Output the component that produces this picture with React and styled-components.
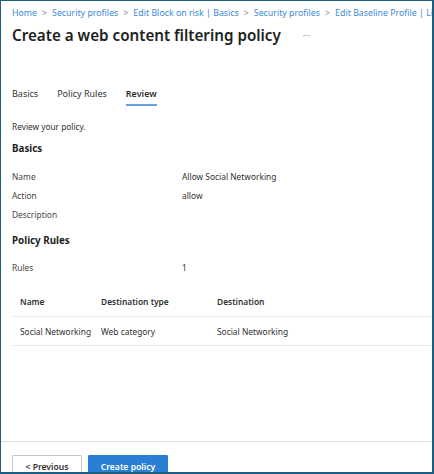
import styled, { createGlobalStyle } from 'styled-components';

const Global = createGlobalStyle`
    html, body {
        margin: 0;
        padding: 0;
        background: #fff;
    }
    * {
        box-sizing: border-box;
    }
`;

const Frame = styled.div`
    width: 434px;
    height: 474px;
    border-style: solid;
    border-color: #1d5f80;
    border-width: 1px 2px 2px 1px;
    display: flex;
    flex-direction: column;
    overflow: hidden;
    font-family: "Noto Sans", "Open Sans", sans-serif;
    color: #323130;
    background: #fff;
`;

const Main = styled.div`
    flex: 1;
    padding: 0 0 0 11px;
`;

const Crumbs = styled.nav`
    display: flex;
    align-items: center;
    white-space: nowrap;
    font-size: 8.8px;
    height: 24px;
`;

const Crumb = styled.span`
    color: #3d89d8;
`;

const Sep = styled.span`
    color: #8a8886;
    margin: 0 5px 0 5px;
`;

const TitleRow = styled.div`
    display: flex;
    align-items: center;
    height: 20px;
`;

const Title = styled.h1`
    margin: 0;
    font-size: 15.2px;
    font-weight: 600;
    color: #201f1e;
    white-space: nowrap;
`;

const More = styled.span`
    margin-left: 22px;
    color: #8a8886;
    font-size: 9px;
`;

const Tabs = styled.div`
    display: flex;
    gap: 19px;
    margin-top: 42px;
`;

const Tab = styled.div`
    font-size: 9px;
    color: #323130;
    font-weight: ${p => (p.$active ? 600 : 400)};
    line-height: 14px;
    padding-bottom: 3px;
    border-bottom: 2px solid ${p => (p.$active ? '#6aa2e0' : 'transparent')};
`;

const Intro = styled.p`
    margin: 14px 0 0;
    font-size: 8.3px;
    line-height: 14px;
`;

const Section = styled.h2`
    margin: ${p => p.$top}px 0 0;
    font-size: 9.8px;
    line-height: 14px;
    font-weight: 700;
    color: #201f1e;
`;

const Field = styled.div`
    display: grid;
    grid-template-columns: 170px 1fr;
    font-size: 8.4px;
    line-height: 19px;
    margin-top: ${p => p.$top || 0}px;
`;

const Label = styled.span`
    color: #484644;
`;

const Table = styled.div`
    margin-top: 10px;
    font-size: 8.4px;
`;

const Row = styled.div`
    display: grid;
    grid-template-columns: 81px 116px 1fr;
    align-items: center;
    height: ${p => (p.$head ? 30 : 29)}px;
    padding-left: 8px;
    border-bottom: 1px solid #edebe9;
    font-weight: ${p => (p.$head ? 600 : 400)};
    white-space: nowrap;
`;

const Footer = styled.div`
    border-top: 1px solid #e1dfdd;
    display: flex;
    gap: 6px;
    padding: 13px 0 0 11px;
    height: 31px;
`;

const Button = styled.button`
    flex: none;
    font-family: inherit;
    font-size: 8.6px;
    font-weight: 600;
    height: 24px;
    width: ${p => p.$w}px;
    border-radius: 1px;
    border: 1px solid ${p => (p.$primary ? '#2a7fd4' : '#c8c6c4')};
    background: ${p => (p.$primary ? '#2a7fd4' : '#fff')};
    color: ${p => (p.$primary ? '#fff' : '#323130')};
    padding: 0;
`;

const crumbs = ['Home', 'Security profiles', 'Edit Block on risk | Basics', 'Security profiles', 'Edit Baseline Profile | Li'];

export default function App() {
    return (
        <Frame>
            <Global />
            <Main>
                <Crumbs>
                    {crumbs.map((c, i) => (
                        <span key={i}>
                            {i > 0 && <Sep>&gt;</Sep>}
                            <Crumb>{c}</Crumb>
                        </span>
                    ))}
                </Crumbs>
                <TitleRow>
                    <Title>Create a web content filtering policy</Title>
                    <More>···</More>
                </TitleRow>
                <Tabs>
                    <Tab>Basics</Tab>
                    <Tab>Policy Rules</Tab>
                    <Tab $active>Review</Tab>
                </Tabs>
                <Intro>Review your policy.</Intro>
                <Section $top={8}>Basics</Section>
                <Field $top={11}><Label>Name</Label><span>Allow Social Networking</span></Field>
                <Field><Label>Action</Label><span>allow</span></Field>
                <Field><Label>Description</Label><span></span></Field>
                <Section $top={10}>Policy Rules</Section>
                <Field $top={10}><Label>Rules</Label><span>1</span></Field>
                <Table>
                    <Row $head>
                        <span>Name</span>
                        <span>Destination type</span>
                        <span>Destination</span>
                    </Row>
                    <Row>
                        <span>Social Networking</span>
                        <span>Web category</span>
                        <span>Social Networking</span>
                    </Row>
                </Table>
            </Main>
            <Footer>
                <Button $w={70}>&lt; Previous</Button>
                <Button $w={80} $primary>Create policy</Button>
            </Footer>
        </Frame>
    );
}
